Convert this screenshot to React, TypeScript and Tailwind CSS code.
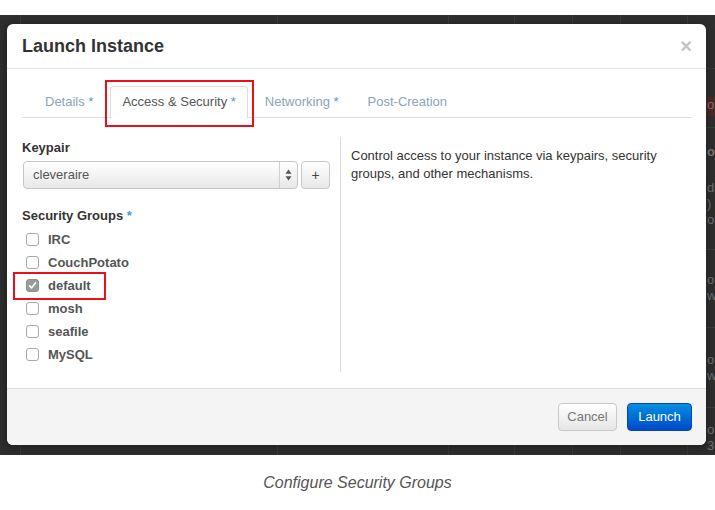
import type { ReactNode } from "react";

const FONT = { fontFamily: '"Liberation Sans", Arial, sans-serif' };

const TABS = [
  { label: "Details", required: true },
  { label: "Access & Security", required: true, active: true },
  { label: "Networking", required: true },
  { label: "Post-Creation", required: false },
];

const GROUPS = [
  { name: "IRC", checked: false },
  { name: "CouchPotato", checked: false },
  { name: "default", checked: true },
  { name: "mosh", checked: false },
  { name: "seafile", checked: false },
  { name: "MySQL", checked: false },
];

function Star() {
  return <span className="text-[#4a97d0]">{"\u00a0*"}</span>;
}

function Checkbox({ checked }: { checked: boolean }) {
  if (checked) {
    return (
      <span className="w-[13px] h-[13px] rounded-[3px] bg-[#9a9a9f] border border-[#8e8e93] flex items-center justify-center shrink-0">
        <svg width="9" height="9" viewBox="0 0 9 9">
          <path d="M1.5 4.8 L3.6 6.9 L7.6 1.8" fill="none" stroke="#fff" strokeWidth="1.6" strokeLinecap="round" strokeLinejoin="round" />
        </svg>
      </span>
    );
  }
  return <span className="w-[13px] h-[13px] rounded-[3px] bg-white border border-[#a9a9a9] shrink-0" />;
}

function Btn({ children, primary }: { children: ReactNode; primary?: boolean }) {
  return (
    <button
      className={`h-[28px] rounded-[4px] text-[13px] border ${
        primary
          ? "w-[65px] bg-gradient-to-b from-[#0a8ee0] to-[#0348c8] border-[#0448b8] text-white"
          : "w-[59px] bg-gradient-to-b from-white to-[#e6e6e6] border-[#c8c8c8] text-[#777]"
      }`}
    >
      {children}
    </button>
  );
}

// faint table that sits under the dark backdrop
function BackdropTable() {
  const cols = [20, 257, 171, 66, 58, 48, 67];
  return (
    <div className="flex h-full">
      {cols.map((w, i) => (
        <div key={i} style={{ width: w }} className={`h-full shrink-0 ${i ? "border-l border-[#3b3b3b]" : ""}`} />
      ))}
      <div className="h-full flex-1 border-l border-[#3b3b3b] flex flex-col text-[13px] text-[#6f6f6f] leading-[16px] whitespace-nowrap">
        <div className="h-[54px] border-b border-[#3c3c3c]" />
        <div className="h-[28px]" />
        <div className="h-[19px] bg-[#472a29] pl-[19px] text-[#8a6a68]">of</div>
        <div className="h-[12px] border-b border-[#3c3c3c]" />
        <div className="pl-[19px] pt-[16px] font-bold text-[#777]">ot</div>
        <div className="pl-[19px] pt-[20px]">da</div>
        <div className="pl-[19px]">)</div>
        <div className="pl-[19px]">ou</div>
        <div className="h-[22px] border-b border-[#3c3c3c]" />
        <div className="pl-[19px] pt-[22px]">o</div>
        <div className="pl-[19px]">w</div>
        <div className="h-[24px] border-b border-[#3c3c3c]" />
        <div className="pl-[19px] pt-[24px]">o</div>
        <div className="pl-[19px]">w</div>
        <div className="h-[24px] border-b border-[#3c3c3c]" />
        <div className="pl-[19px] pt-[14px]">o</div>
        <div className="pl-[19px]">3 w</div>
      </div>
    </div>
  );
}

export default function App() {
  return (
    <div className="w-[715px] h-[510px] bg-white pt-[15px] overflow-hidden" style={FONT}>
      {/* Dark backdrop with modal */}
      <div className="relative h-[440px] bg-[#2e2e2e] overflow-hidden">
        <BackdropTable />

        <div className="absolute left-[7px] top-[9px] w-[699px] h-[421px] bg-white rounded-[6px] flex flex-col shadow-[0_2px_8px_rgba(0,0,0,0.4)]">
          {/* Header */}
          <div className="h-[45px] shrink-0 flex items-center justify-between pl-[15px] pr-[14px] border-b border-[#e5e5e5]">
            <h3 className="text-[18px] font-bold text-[#333] leading-none">Launch Instance</h3>
            <span className="text-[20px] font-bold text-[#c4c4c4] leading-none">×</span>
          </div>

          {/* Body */}
          <div className="flex-1 px-[15px] pt-[17px] pb-[16px] flex flex-col">
            <ul className="h-[32px] shrink-0 flex gap-[5px] pl-[11px] border-b border-[#ddd]">
              {TABS.map((t) => (
                <li
                  key={t.label}
                  className={`px-[11px] text-[13px] leading-[29px] rounded-t-[4px] border whitespace-nowrap ${
                    t.active
                      ? "bg-white border-[#ddd] border-b-white text-[#555] h-[33px] -mb-px"
                      : "border-transparent text-[#89a5b8] h-[32px]"
                  }`}
                >
                  {t.label}
                  {t.required && <Star />}
                </li>
              ))}
            </ul>

            <div className="flex-1 flex pt-[19px]">
              {/* Left column */}
              <div className="w-[308px] shrink-0">
                <p className="text-[13px] font-bold text-[#333] leading-[20px] pt-px">Keypair</p>
                <div className="mt-[3px] flex items-center gap-[3px] pl-[1px]">
                  <div className="flex-1 h-[28px] flex items-stretch rounded-[4px] border border-[#c6c6c6] bg-gradient-to-b from-white to-[#e8e8e8]">
                    <span className="flex-1 flex items-center pl-[9px] text-[13px] text-[#555]">cleveraire</span>
                    <span className="w-[18px] border-l border-[#d0d0d0] flex items-center justify-center">
                      <svg width="7" height="12" viewBox="0 0 7 12">
                        <path d="M3.5 0.5 L6.5 4.8 L0.5 4.8 Z" fill="#555" />
                        <path d="M3.5 11.5 L6.5 7.2 L0.5 7.2 Z" fill="#555" />
                      </svg>
                    </span>
                  </div>
                  <button className="w-[29px] h-[28px] rounded-[4px] border border-[#c8c8c8] bg-gradient-to-b from-white to-[#e8e8e8] text-[14px] text-[#444] leading-none">
                    +
                  </button>
                </div>

                <p className="mt-[17px] text-[13px] font-bold text-[#333] leading-[20px]">
                  Security Groups
                  <Star />
                </p>
                <div className="mt-[2px]">
                  {GROUPS.map((g) => (
                    <label key={g.name} className="h-[23px] flex items-center gap-[9px] pl-[4px]">
                      <Checkbox checked={g.checked} />
                      <span className="text-[13px] font-bold text-[#555]">{g.name}</span>
                    </label>
                  ))}
                </div>
              </div>

              {/* Right column */}
              <div className="ml-[10px] flex-1 border-l border-[#dcdcdc] pl-[10px] pt-[10px]">
                <p className="text-[13px] leading-[18px] text-[#333]">
                  Control access to your instance via keypairs, security groups, and other mechanisms.
                </p>
              </div>
            </div>
          </div>

          {/* Footer */}
          <div className="h-[57px] shrink-0 flex items-center justify-end gap-[10px] pr-[14px] bg-[#f4f4f4] border-t border-[#ddd] rounded-b-[6px]">
            <Btn>Cancel</Btn>
            <Btn primary>Launch</Btn>
          </div>

          {/* Annotation boxes */}
          <div className="absolute left-[98px] top-[56px] w-[149px] h-[47px] border-2 border-[#e8101a]" />
          <div className="absolute left-[6px] top-[248px] w-[93px] h-[28px] border-2 border-[#e8101a]" />
        </div>
      </div>

      {/* Caption */}
      <div className="h-[55px] flex items-center justify-center">
        <p className="text-[16px] italic text-[#555]">Configure Security Groups</p>
      </div>
    </div>
  );
}
